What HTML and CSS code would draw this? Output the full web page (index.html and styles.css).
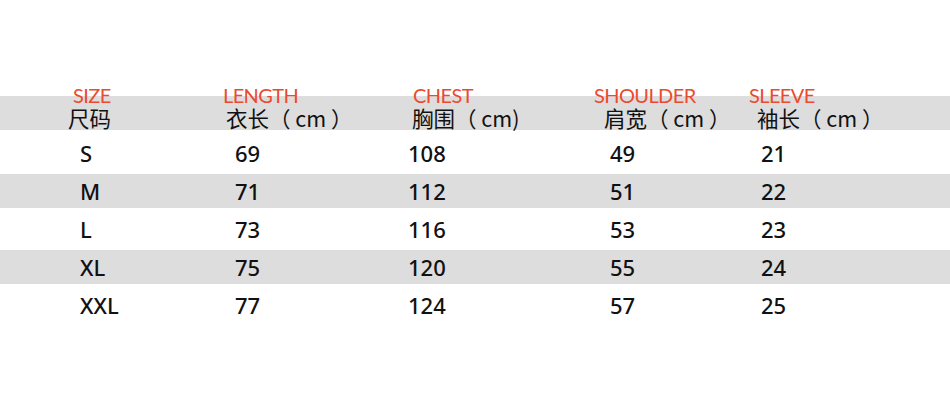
FILE: index.html
```html
<!DOCTYPE html>
<html lang="zh">
<head>
<meta charset="utf-8">
<title>Size chart</title>
<link rel="stylesheet" href="styles.css">
</head>
<body>
<div class="chart">
  <div class="row head">
    <div class="cell c1"><span class="en">SIZE</span><span class="cn">尺码</span></div>
    <div class="cell c2"><span class="en">LENGTH</span><span class="cn">衣长（ cm ）</span></div>
    <div class="cell c3"><span class="en">CHEST</span><span class="cn">胸围（ cm)</span></div>
    <div class="cell c4"><span class="en">SHOULDER</span><span class="cn">肩宽（ cm ）</span></div>
    <div class="cell c5"><span class="en">SLEEVE</span><span class="cn">袖长（ cm ）</span></div>
  </div>
  <div class="row data"><div class="cell c1">S</div><div class="cell c2">69</div><div class="cell c3">108</div><div class="cell c4">49</div><div class="cell c5">21</div></div>
  <div class="row data grey"><div class="cell c1">M</div><div class="cell c2">71</div><div class="cell c3">112</div><div class="cell c4">51</div><div class="cell c5">22</div></div>
  <div class="row data"><div class="cell c1">L</div><div class="cell c2">73</div><div class="cell c3">116</div><div class="cell c4">53</div><div class="cell c5">23</div></div>
  <div class="row data grey"><div class="cell c1">XL</div><div class="cell c2">75</div><div class="cell c3">120</div><div class="cell c4">55</div><div class="cell c5">24</div></div>
  <div class="row data"><div class="cell c1">XXL</div><div class="cell c2">77</div><div class="cell c3">124</div><div class="cell c4">57</div><div class="cell c5">25</div></div>
</div>
</body>
</html>
```
FILE: styles.css
```css
html, body {
  margin: 0;
  padding: 0;
  background: #ffffff;
}
body {
  width: 950px;
  height: 403px;
  overflow: hidden;
}
.chart {
  padding-top: 85px;
  display: flex;
  flex-direction: column;
}
.row {
  display: grid;
  grid-template-columns: 68px 155px 185px 186px 155px 1fr;
}
.row::before {
  content: "";
}
.head {
  height: 45px;
  background: linear-gradient(to bottom, transparent 11px, #dddddd 11px);
  margin-bottom: 4px;
}
.head .cell {
  display: flex;
  flex-direction: column;
}
.en {
  font-family: "Lato", "DejaVu Sans", sans-serif;
  font-size: 20px;
  line-height: 20px;
  height: 20px;
  color: #ec4a2e;
  letter-spacing: -0.6px;
}
.cn {
  font-family: "Noto Sans CJK SC", "Noto Sans", sans-serif;
  font-size: 21.5px;
  line-height: 25px;
  color: #111111;
  white-space: pre;
}
.head .c1 .en { padding-left: 5px; }
.head .c1 .cn { padding-left: 0; }
.head .c2 .cn { padding-left: 3px; }
.head .c3 .en { padding-left: 5px; }
.head .c3 .cn { padding-left: 4px; }
.head .c4 .cn { padding-left: 10px; }
.head .c5 .cn { padding-left: 8px; }

.data {
  height: 38px;
  padding: 2px 0;
  box-sizing: border-box;
  font-family: "Noto Sans", "Open Sans", sans-serif;
  font-size: 22px;
  font-weight: 500;
  line-height: 34px;
  color: #111111;
}
.grey {
  background: #dddddd;
  background-clip: content-box;
}
.data .c1 { padding-left: 12px; }
.data .c2 { padding-left: 12px; }
.data .c3 { padding-left: 0; }
.data .c4 { padding-left: 16px; }
.data .c5 { padding-left: 12px; }
```
